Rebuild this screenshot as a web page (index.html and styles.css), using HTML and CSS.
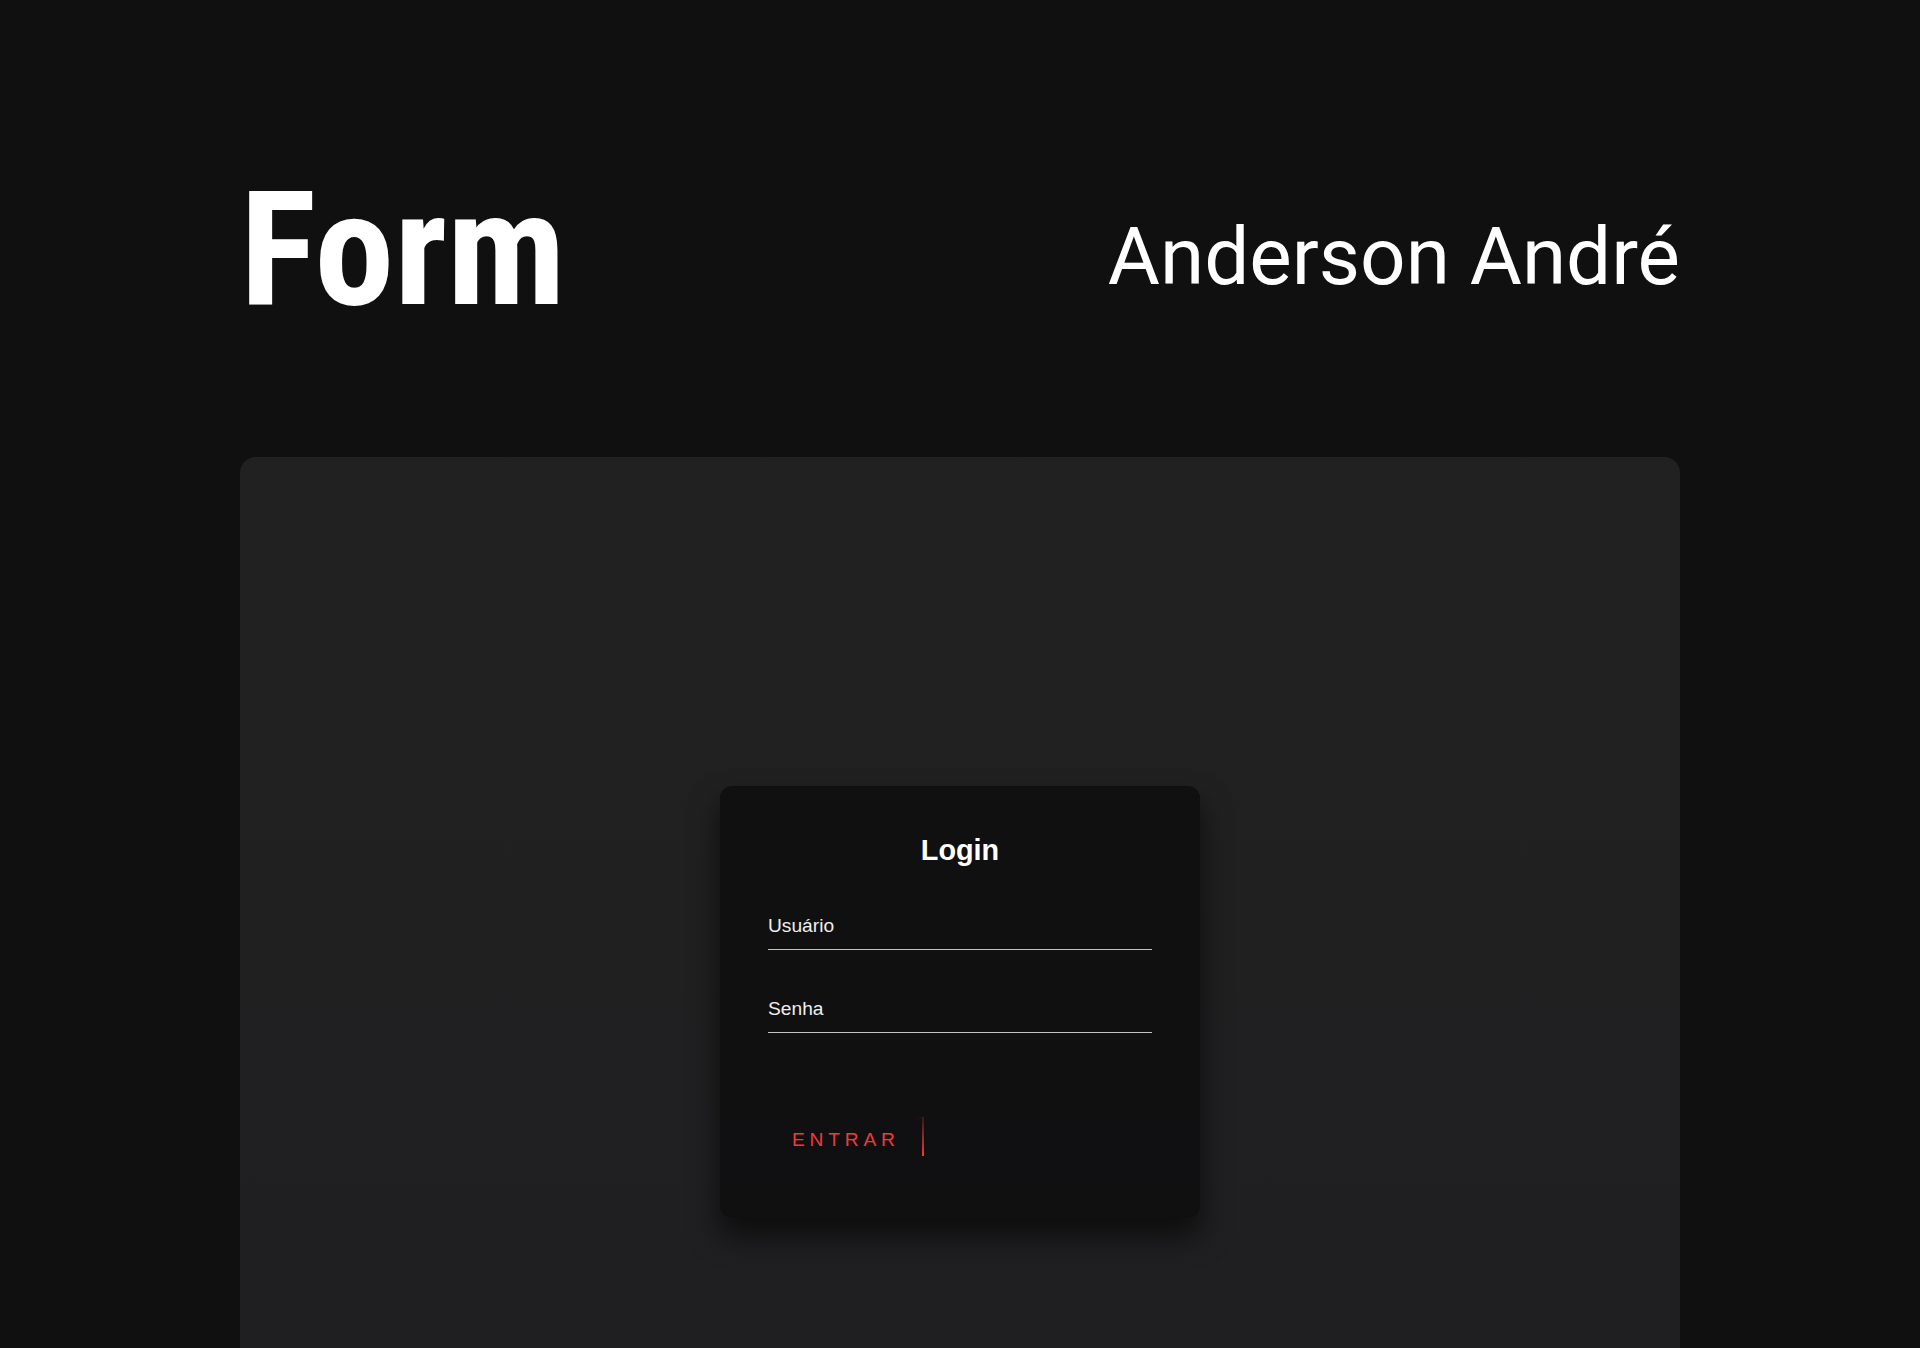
FILE: index.html
```html
<!DOCTYPE html>
<html>
<head>
	<meta charset="utf-8">
	<title>Form - Anderson André</title>
	<link rel="stylesheet" href="styles.css">
</head>
<body>
	<header class="top">
		<h1 class="title">Form</h1>
		<h2 class="author">Anderson André</h2>
	</header>
	<!-- area do formulario -->
	<section class="stage">
		<div class="login-box">
			<h2>Login</h2>
			<form onsubmit="return false;">
				<div class="user-box">
					<input type="text" name="user" required>
					<label>Usuário</label>
				</div>
				<div class="user-box">
					<input type="password" name="pass" required>
					<label>Senha</label>
				</div>
				<a href="#" class="btn">
					<span class="b1"></span>
					<span class="b2"></span>
					<span class="b3"></span>
					<span class="b4"></span>
					Entrar
				</a>
			</form>
		</div>
	</section>
</body>
</html>
```

FILE: styles.css
```css
*{margin: 0;padding: 0;box-sizing: border-box;}
body{background-color: #101010;font-family: "Liberation Sans", Arial, sans-serif;color: #fff;}
.top{width: 1440px;margin: 0 auto;padding: 170px 0 127px;display: flex;justify-content: space-between;align-items: center;}
.title{font-family: Roboto, sans-serif;font-weight: 700;font-size: 160px;line-height: 1;font-stretch: 75%;}
.author{font-family: Roboto, sans-serif;font-weight: 400;font-size: 80px;line-height: 1;margin-top: 13px;}
.stage{width: 1440px;height: 1090px;margin: 0 auto;border-radius: 16px;background: linear-gradient(180deg, #212121 0%, #202022 60%, #1e1d21 100%);display: flex;align-items: center;justify-content: center;}
.login-box{width: 480px;padding: 48px 48px 51px;background: rgba(0,0,0,.5);border-radius: 12px;box-shadow: 0 18px 30px rgba(0,0,0,.6);}
.login-box h2{font-size: 28.8px;text-align: center;margin-bottom: 36px;color: #fff;}
.user-box{position: relative;}
.user-box input{width: 100%;padding: 12px 0;font-size: 19.2px;font-family: inherit;color: #fff;margin-bottom: 36px;border: none;border-bottom: 1px solid #c4c4c4;outline: none;background: transparent;}
.user-box label{position: absolute;top: 0;left: 0;padding: 12px 0;font-size: 19.2px;color: #eee;pointer-events: none;}
.btn{position: relative;display: inline-block;padding: 12px 24px;margin-top: 48px;color: #f03a3a;font-size: 19.2px;text-decoration: none;text-transform: uppercase;letter-spacing: 4.8px;overflow: hidden;}
.btn span{position: absolute;display: block;}
.b1{top: 0;left: 94%;width: 100%;height: 2px;background: linear-gradient(90deg, transparent, #f03a3a);}
.b2{top: -15%;right: 0;width: 2px;height: 100%;background: linear-gradient(180deg, transparent, #f03a3a);}
.b3{bottom: 0;right: -100%;width: 100%;height: 2px;}
.b4{bottom: -100%;left: 0;width: 2px;height: 100%;}
```
